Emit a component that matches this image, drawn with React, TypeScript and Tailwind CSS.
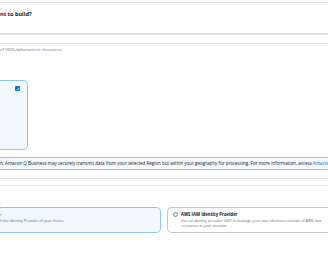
export default function App() {
  return (
    <div className="relative h-[256px] w-[328px] overflow-hidden bg-white font-['Open_Sans',sans-serif] text-[#16191f]">
      <div className="mt-[2px] h-px bg-[#e3e6e8]" />

      <p className="mt-[7px] text-[5.6px] font-bold leading-[8px]">nt to build?</p>

      <div className="mt-[15px] h-[11px] border-y border-t-2 border-[#dcdfe2] bg-white" />

      <p className="mt-[3px] text-[4px] leading-[6px] text-[#5f6b7a]">of 1000 alphanumeric characters.</p>

      <div className="mt-[27px] flex h-[70px] w-[28px] justify-end rounded-r-[5px] border border-l-0 border-[#8ec5f0] bg-[#f1f9ff] pr-[7px] pt-[5px]">
        <span className="flex h-[5px] w-[5px] items-center justify-center rounded-[1px] bg-[#0972d3]">
          <svg viewBox="0 0 10 10" className="h-[4px] w-[4px]" fill="none" stroke="white" strokeWidth="2">
            <path d="M2 5.5l2 2 4-5" />
          </svg>
        </span>
      </div>

      <div className="mt-[7px] flex h-[13px] items-center whitespace-nowrap border-y border-[#8ec5f0] bg-[#f2f8fd] text-[4.5px]">
        n, Amazon Q Business may securely transmit data from your selected Region but within your geography for processing. For more information, access
        <span className="ml-[1.2px] text-[#0972d3]">Amazon Q</span>
      </div>

      <div className="mt-[8px] h-[8px] border-y border-[#e3e6e8]" />

      <p className="mt-[14px] text-[4px] leading-[6px] text-[#5f6b7a]">.</p>

      <div className="mt-[1px] flex gap-[6px]">
        <div className="flex h-[26px] w-[161px] shrink-0 flex-col rounded-r-[5px] border border-l-0 border-[#8ec5f0] bg-[#f1f9ff] pt-[3px]">
          <p className="text-[4.3px] leading-[6px] text-[#0972d3]">r</p>
          <p className="mt-[1px] text-[3.7px] leading-[6px] text-[#5f6b7a]">h the Identity Provider of your choice.</p>
        </div>
        <div className="flex h-[26px] min-w-0 flex-1 gap-[3px] overflow-hidden rounded-l-[5px] border border-r-0 border-[#c6c6cd] pl-[5px] pt-[3px]">
          <span className="mt-[1px] h-[5px] w-[5px] shrink-0 rounded-full border border-[#7d8998] bg-white" />
          <div className="flex flex-col whitespace-nowrap">
            <p className="text-[4.3px] font-bold leading-[6px]">AWS IAM Identity Provider</p>
            <p className="mt-[1px] text-[3.75px] leading-[5px] text-[#5f6b7a]">Use an identity provider (IdP) to manage your user identities outside of AWS, but</p>
            <p className="text-[3.75px] leading-[5px] text-[#5f6b7a]">resources in your account.</p>
          </div>
        </div>
      </div>
    </div>
  );
}
